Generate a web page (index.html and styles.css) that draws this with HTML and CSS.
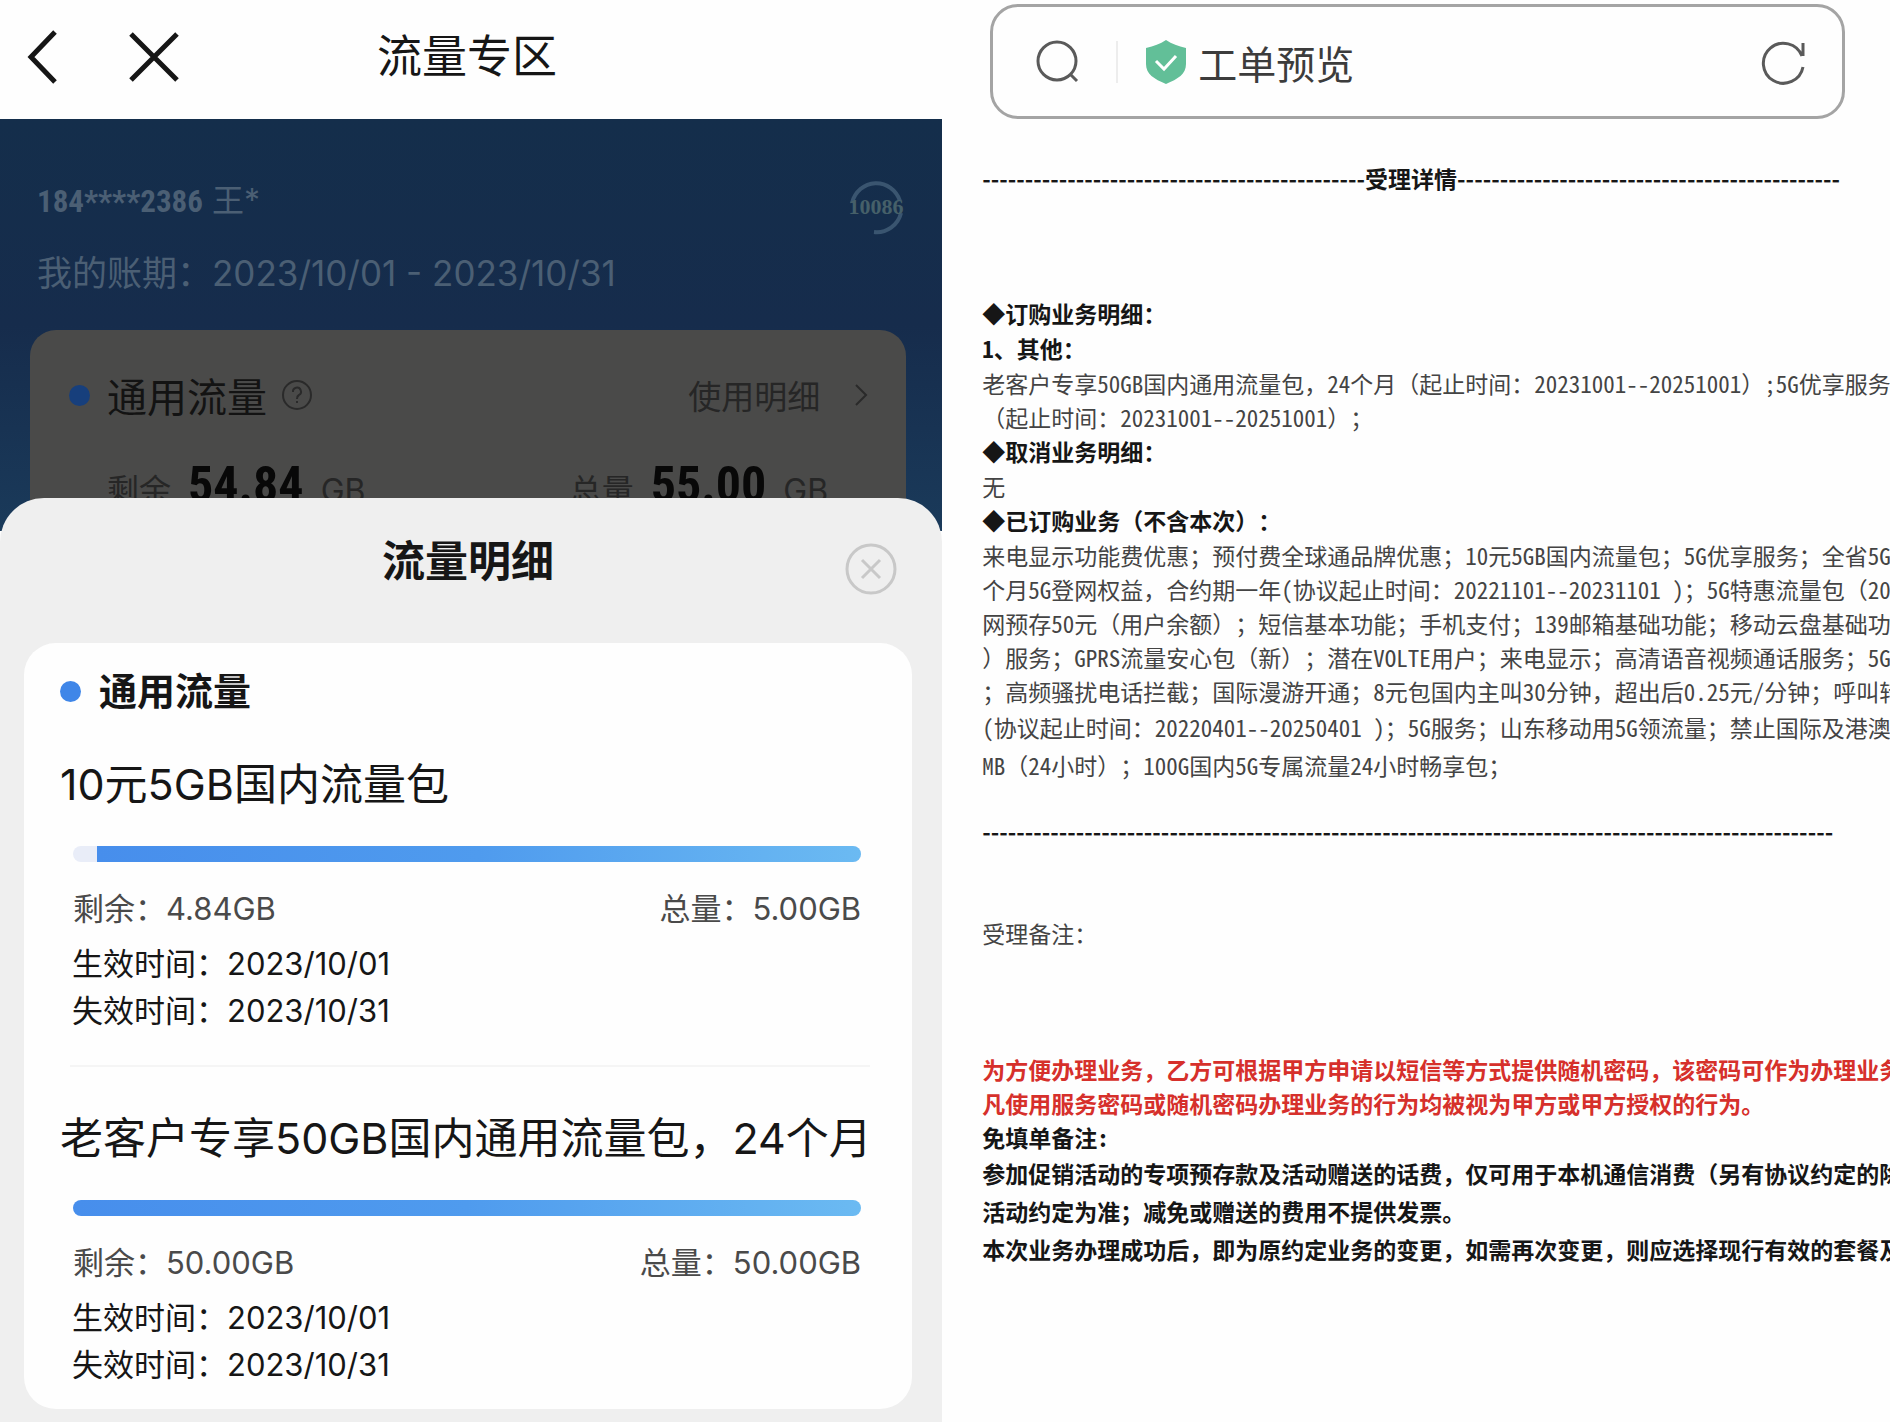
FILE: index.html
```
<!DOCTYPE html>
<html lang="zh-CN">
  <head>
    <meta charset="UTF-8" />
    <meta name="viewport" content="width=device-width, initial-scale=1.0" />
    <title>流量专区</title>
    <link rel="stylesheet" href="styles.css">
  </head>
  <body>
    <main class="phone">
      <header class="topbar">
        <button type="button" class="icon-btn" aria-label="返回">
          <svg width="36" height="56" viewBox="0 0 36 56"><path d="M31 3 7 28l24 25" /></svg>
        </button>
        <button type="button" class="icon-btn" aria-label="关闭">
          <svg width="52" height="52" viewBox="0 0 52 52"><path d="M3 3l46 46M49 3 3 49" /></svg>
        </button>
        <h1>流量专区</h1>
      </header>

      <section class="account">
        <div class="account-head">
          <div>
            <p class="user"><b>184****2386</b> 王*</p>
            <p class="period">我的账期：2023/10/01 - 2023/10/31</p>
          </div>
          <a href="#" class="service" aria-label="10086">
            <svg width="60" height="60" viewBox="0 0 60 60">
              <path d="M6 28A25 26 0 0 1 54 26M55 38A25 25 0 0 1 28 57" />
              <text x="30" y="39" text-anchor="middle">10086</text>
            </svg>
          </a>
        </div>
        <div class="summary">
          <div class="summary-title">
            <i class="dot"></i>
            <h2>通用流量</h2>
            <svg class="help" width="32" height="32" viewBox="0 0 32 32">
              <circle cx="16" cy="16" r="14" />
              <path d="M12 13a4 4 0 1 1 6 3c-2 1-2 2-2 4M16 22v2" />
            </svg>
            <a href="#">使用明细
              <svg width="14" height="24" viewBox="0 0 14 24"><path d="M2 2l10 10L2 22" /></svg>
            </a>
          </div>
          <div class="summary-data">
            <p>剩余 <b>54.84</b> GB</p>
            <p>总量 <b>55.00</b> GB</p>
          </div>
        </div>
      </section>

      <section class="sheet">
        <div class="sheet-head">
          <h2>流量明细</h2>
          <button type="button" class="sheet-close" aria-label="关闭明细">
            <svg width="52" height="52" viewBox="0 0 52 52">
              <circle cx="26" cy="26" r="24" />
              <path d="M17 17l18 18M35 17 17 35" />
            </svg>
          </button>
        </div>
        <div class="card">
          <h3><i class="dot"></i>通用流量</h3>
          <article class="plan">
            <h4>10元5GB国内流量包</h4>
            <div class="bar"><span style="width: 97%"></span></div>
            <div class="amounts"><span>剩余：4.84GB</span><span>总量：5.00GB</span></div>
            <p>生效时间：2023/10/01</p>
            <p>失效时间：2023/10/31</p>
          </article>
          <hr />
          <article class="plan">
            <h4>老客户专享50GB国内通用流量包，24个月</h4>
            <div class="bar"><span style="width: 100%"></span></div>
            <div class="amounts"><span>剩余：50.00GB</span><span>总量：50.00GB</span></div>
            <p>生效时间：2023/10/01</p>
            <p>失效时间：2023/10/31</p>
          </article>
        </div>
      </section>
    </main>

    <section class="order">
      <div class="address">
        <svg class="line-icon" width="44" height="44" viewBox="0 0 44 44">
          <circle cx="21" cy="21" r="19" /><path d="M34 34l7 7" />
        </svg>
        <i class="sep"></i>
        <svg width="42" height="46" viewBox="0 0 42 46">
          <path fill="#62bf98" d="M21 1c6 4 12 6 20 8v16c0 10-8 15-20 20C9 40 1 35 1 25V9c8-2 14-4 20-8z" />
          <path fill="none" stroke="#fff" stroke-width="3" d="M11 22l8 8 12-13" />
        </svg>
        <span>工单预览</span>
        <button type="button" class="icon-btn reload" aria-label="刷新">
          <svg class="line-icon" width="46" height="46" viewBox="0 0 46 46">
            <path d="M43 28A20 20 0 1 1 42 17M43 4v13" />
          </svg>
        </button>
      </div>

      <p class="rule">---------------------------------------------受理详情---------------------------------------------</p>

      <div class="detail">
        <h5>◆订购业务明细：</h5>
        <h5>1、其他：</h5>
        <p>老客户专享50GB国内通用流量包，24个月（起止时间：20231001--20251001）;5G优享服务</p>
        <p>（起止时间：20231001--20251001）；</p>
        <h5>◆取消业务明细：</h5>
        <p>无</p>
        <h5>◆已订购业务（不含本次）：</h5>
        <p>来电显示功能费优惠；预付费全球通品牌优惠；10元5GB国内流量包；5G优享服务；全省5G特</p>
        <p>个月5G登网权益，合约期一年(协议起止时间：20221101--20231101 )；5G特惠流量包（202</p>
        <p>网预存50元（用户余额）；短信基本功能；手机支付；139邮箱基础功能；移动云盘基础功能</p>
        <p>）服务；GPRS流量安心包（新）；潜在VOLTE用户；来电显示；高清语音视频通话服务；5G新</p>
        <p>；高频骚扰电话拦截；国际漫游开通；8元包国内主叫30分钟，超出后0.25元/分钟；呼叫转</p>
        <p class="loose">(协议起止时间：20220401--20250401 )；5G服务；山东移动用5G领流量；禁止国际及港澳台</p>
        <p class="loose">MB（24小时）；100G国内5G专属流量24小时畅享包；</p>
      </div>

      <p class="rule">----------------------------------------------------------------------------------------------------</p>

      <p class="remark">受理备注：</p>

      <div class="notice">
        <p class="red">为方便办理业务，乙方可根据甲方申请以短信等方式提供随机密码，该密码可作为办理业务</p>
        <p class="red">凡使用服务密码或随机密码办理业务的行为均被视为甲方或甲方授权的行为。</p>
        <p>免填单备注:</p>
        <p class="loose">参加促销活动的专项预存款及活动赠送的话费，仅可用于本机通信消费（另有协议约定的除</p>
        <p class="loose">活动约定为准；减免或赠送的费用不提供发票。</p>
        <p class="loose">本次业务办理成功后，即为原约定业务的变更，如需再次变更，则应选择现行有效的套餐及</p>
      </div>
    </section>
  </body>
</html>
```

FILE: styles.css
```
* {
  box-sizing: border-box;
}
body {
  display: flex;
  min-height: 100vh;
  margin: 0;
  overflow-x: hidden;
  font-family: Inter, "Noto Sans CJK SC", sans-serif;
  background-color: #fefefe;
  color: #161616;
}
h1, h2, h3, h4, h5, p {
  margin: 0;
  font-weight: normal;
}
a {
  color: inherit;
  text-decoration: none;
}
svg {
  display: block;
  flex: none;
}
.icon-btn,
.sheet-close {
  padding: 0;
  border: none;
  background: none;
  cursor: pointer;
}

/* left: phone page */
.phone {
  display: flex;
  flex-direction: column;
  width: 49.85%;
  flex: none;
}
.topbar {
  position: relative;
  display: flex;
  align-items: center;
  gap: 68px;
  height: 119px;
  padding: 0 24px 6px;
  background-color: #fefefe;
}
.topbar svg {
  fill: none;
  stroke: #161616;
  stroke-width: 5;
}
.topbar h1 {
  position: absolute;
  left: 0;
  right: 8px;
  text-align: center;
  font-size: 45px;
  line-height: 60px;
  pointer-events: none;
}
.account {
  height: 412px;
  padding: 56px 36px 0 30px;
  background: linear-gradient(#142e4b, #162c4c 50%, #1a3a5a);
}
.account-head {
  display: flex;
  justify-content: space-between;
  height: 155px;
  padding-left: 7px;
  color: #4b5f74;
}
.user {
  font-size: 32px;
  line-height: 52px;
}
.user b {
  font-family: "Liberation Sans Narrow", "Roboto Condensed", Roboto, sans-serif;
  font-size: 31px;
}
.period {
  margin-top: 18px;
  font-size: 35px;
  line-height: 54px;
}
.service path {
  fill: none;
  stroke: #3a5570;
  stroke-width: 4;
}
.service text {
  font: bold 22px "Liberation Serif", serif;
  fill: #466069;
}
.summary {
  height: 201px;
  padding: 35px 38px 0 39px;
  border-radius: 26px 26px 0 0;
  background-color: #4a4a49;
  color: #131313;
}
.summary-title {
  display: flex;
  align-items: center;
  height: 60px;
}
.dot {
  width: 21px;
  height: 21px;
  border-radius: 50%;
  background-color: #3f86e8;
}
.summary .dot {
  background-color: #173f7c;
}
.summary h2 {
  margin: 0 14px 0 17px;
  font-size: 40px;
}
.summary svg {
  fill: none;
  stroke: #2a2a2a;
  stroke-width: 2;
}
.summary a {
  display: flex;
  align-items: center;
  gap: 34px;
  margin-left: auto;
  font-size: 33px;
  color: #262626;
}
.summary-data {
  display: flex;
  justify-content: space-between;
  padding: 24px 40px 0 38px;
  font-size: 32px;
  line-height: 72px;
  color: #262626;
}
.summary-data b {
  margin: 0 8px;
  font-family: "Liberation Sans Narrow", "Roboto Condensed", Roboto, sans-serif;
  font-size: 50px;
  color: #080808;
}
.sheet {
  flex: 1;
  margin-top: -33px;
  padding: 0 30px 13px 24px;
  border-radius: 44px 44px 0 0;
  background-color: #efefef;
}
.sheet-head {
  position: relative;
  height: 145px;
  padding-top: 33px;
}
.sheet-head h2 {
  text-align: center;
  font-size: 43px;
  font-weight: bold;
  line-height: 60px;
}
.sheet-close {
  position: absolute;
  top: 45px;
  right: 15px;
}
.sheet-close svg {
  fill: none;
  stroke: #c8c8c8;
  stroke-width: 3;
}
.card {
  padding: 20px 42px 21px 36px;
  border-radius: 32px;
  background-color: #fefefe;
}
.card h3 {
  display: flex;
  align-items: center;
  gap: 18px;
  font-size: 38px;
  font-weight: bold;
  line-height: 56px;
}
.card hr {
  height: 2px;
  margin: 31px 0 6px 10px;
  border: none;
  background-color: #f5f5f5;
}
.plan {
  padding-top: 34px;
}
.plan h4 {
  height: 62px;
  font-size: 43px;
  line-height: 62px;
  white-space: nowrap;
}
.bar {
  display: flex;
  justify-content: flex-end;
  height: 16px;
  margin: 31px 9px 23px 13px;
  border-radius: 8px;
  overflow: hidden;
  background-color: #e9edf8;
}
.bar span {
  background: linear-gradient(90deg, #478eec, #4f9bee 50%, #6bbaf2);
}
.amounts {
  display: flex;
  justify-content: space-between;
  height: 48px;
  margin: 0 9px 7px 13px;
  font-size: 31px;
  line-height: 48px;
  color: #4a4a4a;
}
.plan p {
  height: 47px;
  margin-left: 12px;
  font-size: 31px;
  line-height: 47px;
}

/* right: work order page */
.order {
  flex: 1;
  min-width: 0;
  padding: 4px 0 0 40px;
  overflow: hidden;
  font-family: "Noto Sans Mono CJK SC", "Noto Sans CJK SC", monospace;
  font-size: 23px;
  text-spacing-trim: space-all;
}
.address {
  display: flex;
  align-items: center;
  height: 115px;
  margin: 0 45px 0 8px;
  padding: 0 36px 0 43px;
  border: 3px solid #a4a4a4;
  border-radius: 28px;
  font-size: 39px;
  color: #3c3c3c;
}
.address span {
  margin-left: 11px;
}
.sep {
  width: 2px;
  height: 42px;
  margin: 0 27px 0 36px;
  background-color: #ededed;
}
.line-icon {
  fill: none;
  stroke: #5a5a5a;
  stroke-width: 3;
}
.reload {
  margin-left: auto;
}
.rule {
  margin-top: 41px;
  font-family: "Noto Sans CJK SC", sans-serif;
  font-weight: bold;
  line-height: 36px;
  white-space: nowrap;
}
.detail {
  margin-top: 100px;
  line-height: 34px;
  white-space: nowrap;
  color: #444;
}
.detail h5 {
  font-size: 23px;
  font-weight: bold;
  line-height: 35px;
  color: #161616;
}
.detail .loose,
.notice .loose {
  line-height: 38px;
}
.detail + .rule {
  margin-top: 29px;
}
.remark {
  margin-top: 67px;
  line-height: 34px;
  color: #444;
}
.notice {
  margin-top: 102px;
  line-height: 34px;
  white-space: nowrap;
}
.notice p {
  font-weight: bold;
}
.notice .red {
  color: #d6302b;
}
```
